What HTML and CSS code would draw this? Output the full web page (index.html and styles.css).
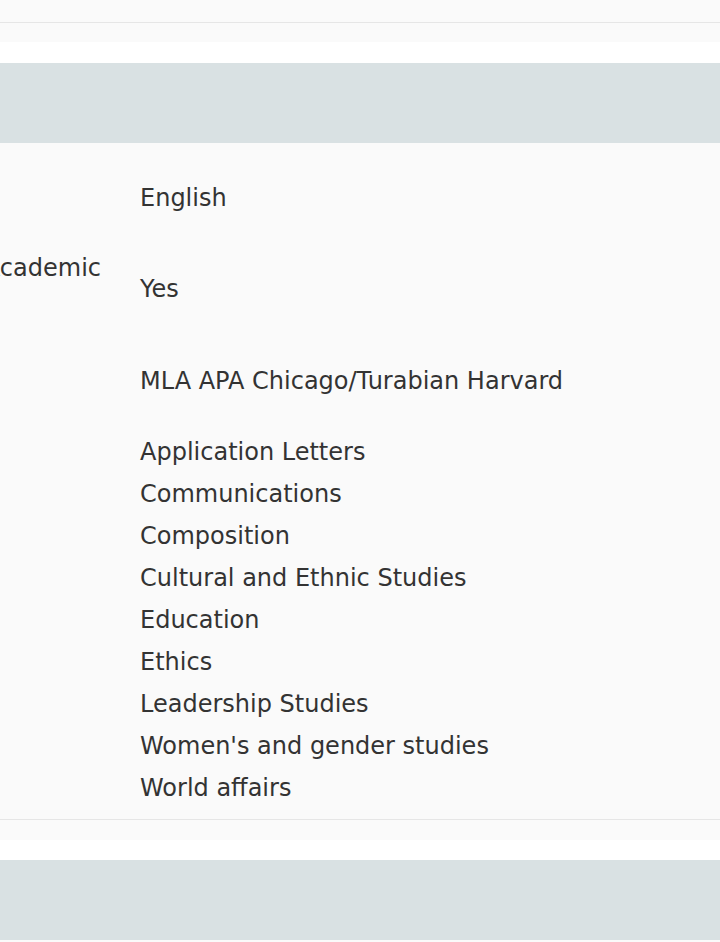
FILE: index.html
```html
<!DOCTYPE html>
<html lang="en">
<head>
<meta charset="utf-8">
<title>Details</title>
<link rel="stylesheet" href="styles.css">
</head>
<body>
<div class="panel panel-top">
  <div class="panel-end"></div>
</div>
<div class="spacer"></div>
<div class="band"></div>
<div class="panel panel-main">
  <div class="rows">
    <div class="row">
      <div class="label"></div>
      <div class="value">English</div>
    </div>
    <div class="row">
      <div class="label"><span>Academic</span></div>
      <div class="value value-offset">Yes</div>
    </div>
    <div class="row">
      <div class="label"></div>
      <div class="value">MLA APA Chicago/Turabian Harvard</div>
    </div>
    <div class="row">
      <div class="label"></div>
      <ul class="value list">
        <li>Application Letters</li>
        <li>Communications</li>
        <li>Composition</li>
        <li>Cultural and Ethnic Studies</li>
        <li>Education</li>
        <li>Ethics</li>
        <li>Leadership Studies</li>
        <li>Women's and gender studies</li>
        <li>World affairs</li>
      </ul>
    </div>
  </div>
</div>
<div class="spacer spacer-bottom"></div>
<div class="band"></div>
<div class="panel panel-tail"></div>
</body>
</html>
```

FILE: styles.css
```css
html, body {
  margin: 0;
  padding: 0;
  background: #ffffff;
  overflow: hidden;
}
body {
  font-family: "DejaVu Sans", sans-serif;
  font-size: 24px;
  line-height: 42px;
  color: #333333;
}
.panel {
  background: #fafafa;
}
.panel-top {
  padding-bottom: 19px;
}
.panel-end {
  height: 22px;
  border-bottom: 1px solid #e6e6e6;
}
.spacer {
  height: 21px;
  background: #ffffff;
}
.spacer-bottom {
  height: 20px;
}
.band {
  height: 80px;
  background: #d9e1e3;
}
.panel-main {
  padding-top: 34px;
  padding-bottom: 20px;
}
.rows {
  display: flex;
  flex-direction: column;
  gap: 29px;
  padding-bottom: 10px;
  border-bottom: 1px solid #e6e6e6;
}
.row {
  display: grid;
  grid-template-columns: 101px 1fr;
  column-gap: 39px;
  align-items: start;
}
.label {
  display: flex;
  justify-content: flex-end;
  white-space: nowrap;
  min-width: 0;
  margin-top: -1px;
}
.value-offset {
  padding: 20px 0 21px;
}
.list {
  list-style: none;
  margin: 0;
  padding: 0;
}
.panel-tail {
  height: 2px;
}
```
